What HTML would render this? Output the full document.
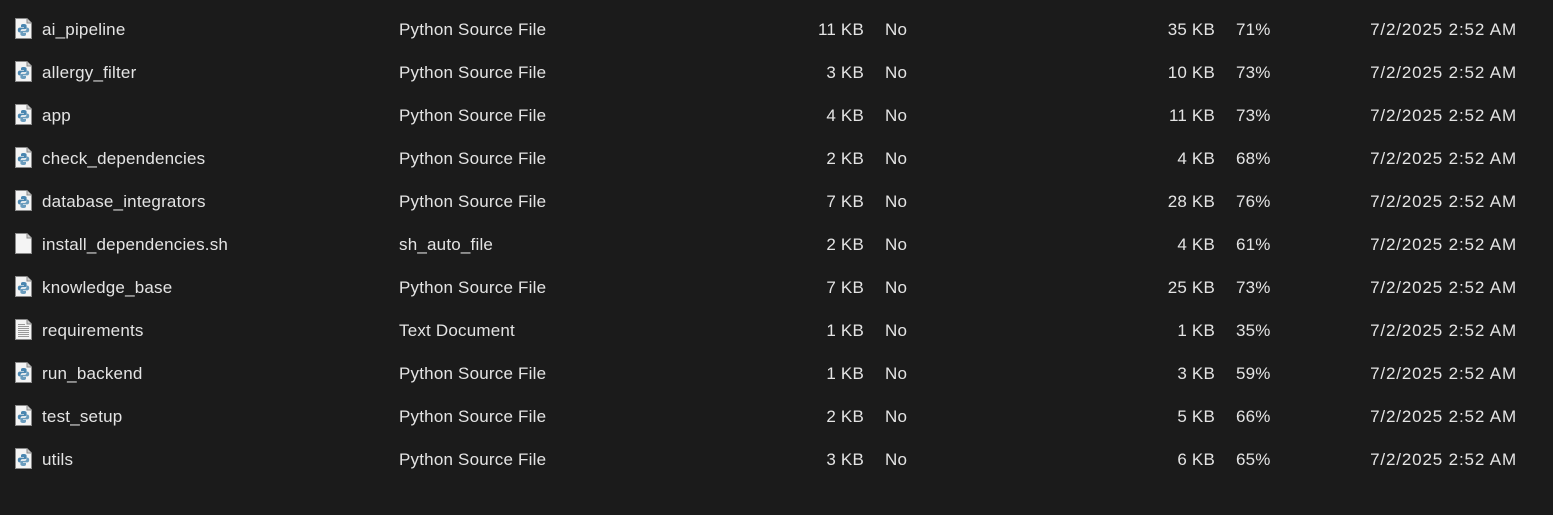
<!DOCTYPE html>
<html><head><meta charset="utf-8"><style>
body{margin:0;background:#1b1b1b;width:1553px;height:515px;overflow:hidden;font-family:"Segoe UI","Liberation Sans",sans-serif;font-size:17px;color:#e4e4e4;letter-spacing:0.2px}
.r{position:absolute;left:0;width:1553px;height:43px}
.r span{position:absolute;top:9px;line-height:22px;white-space:nowrap}
.r span.d{letter-spacing:0.85px}
svg{position:absolute;left:15px;top:8px}
</style></head><body>
<svg width="0" height="0" style="position:absolute">
<defs>
<symbol id="py" viewBox="0 0 17 21"><path d="M0.5 0.5H12L16.5 5V20.5H0.5Z" fill="#f4f4f4" stroke="#8a8a8a"/><path d="M12 0.5V5H16.5" fill="#ccc" stroke="#8a8a8a"/><path d="M8.5 6c-2 0-2.5 .7-2.5 1.6V9h3v.6H4.6c-1 0-1.8.8-1.8 2.4s.7 2.4 1.7 2.4H5.6v-1.5c0-1 .8-1.8 1.8-1.8h2.6c.9 0 1.6-.7 1.6-1.5V7.6C11.6 6.7 10.6 6 8.5 6z" fill="#4a86b0"/><path d="M8.5 18c2 0 2.5-.7 2.5-1.6V15H8v-.6h4.4c1 0 1.8-.8 1.8-2.4s-.7-2.4-1.7-2.4H11.4v1.5c0 1-.8 1.8-1.8 1.8H7c-.9 0-1.6.7-1.6 1.5v2C5.4 17.3 6.4 18 8.5 18z" fill="#6a9cbd"/></symbol>
<symbol id="bl" viewBox="0 0 17 21"><path d="M0.5 0.5H12L16.5 5V20.5H0.5Z" fill="#f4f4f4" stroke="#8a8a8a"/><path d="M12 0.5V5H16.5" fill="#ccc" stroke="#8a8a8a"/></symbol>
<symbol id="tx" viewBox="0 0 17 21"><path d="M0.5 0.5H12L16.5 5V20.5H0.5Z" fill="#f4f4f4" stroke="#8a8a8a"/><path d="M12 0.5V5H16.5" fill="#ccc" stroke="#8a8a8a"/><path d="M3 5.5h7M3 7.5h11M3 9.5h11M3 11.5h11M3 13.5h11M3 15.5h11M3 17.5h11" stroke="#999" stroke-width="1"/></symbol>
</defs></svg>
<div id="c"></div>
<script>
const d=[["py","ai_pipeline","Python Source File","11 KB","35 KB","71%"],["py","allergy_filter","Python Source File","3 KB","10 KB","73%"],["py","app","Python Source File","4 KB","11 KB","73%"],["py","check_dependencies","Python Source File","2 KB","4 KB","68%"],["py","database_integrators","Python Source File","7 KB","28 KB","76%"],["bl","install_dependencies.sh","sh_auto_file","2 KB","4 KB","61%"],["py","knowledge_base","Python Source File","7 KB","25 KB","73%"],["tx","requirements","Text Document","1 KB","1 KB","35%"],["py","run_backend","Python Source File","1 KB","3 KB","59%"],["py","test_setup","Python Source File","2 KB","5 KB","66%"],["py","utils","Python Source File","3 KB","6 KB","65%"]];
let h="";d.forEach((r,i)=>{h+=`<div class="r" style="top:${10+i*43}px"><svg width="17" height="21"><use href="#${r[0]}"/></svg><span style="left:42px">${r[1]}</span><span style="left:399px">${r[2]}</span><span style="right:${1553-864}px">${r[3]}</span><span style="left:885px">No</span><span style="right:${1553-1215}px">${r[4]}</span><span style="left:1236px">${r[5]}</span><span class="d" style="right:${1553-1517}px">7/2/2025 2:52 AM</span></div>`});
document.getElementById("c").innerHTML=h;
</script>
</body></html>
